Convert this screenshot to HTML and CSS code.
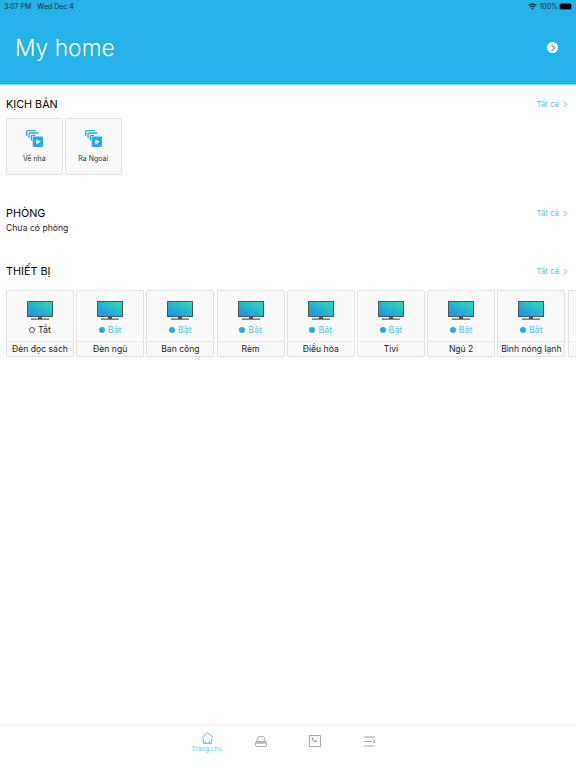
FILE: index.html
```html
<!DOCTYPE html>
<html lang="en">
<head>
  <meta charset="UTF-8">
  <title>My home</title>
  <link rel="stylesheet" href="styles.css">
</head>
<body>

<svg class="defs" width="0" height="0">
  <defs>
    <linearGradient id="screen" x1="0" y1="1" x2="1" y2="0">
      <stop offset="0" stop-color="#1c8ff0"/>
      <stop offset="1" stop-color="#30dcae"/>
    </linearGradient>
    <symbol id="tv" viewBox="0 0 26 20">
      <rect x="0" y="0" width="26" height="16" fill="#4d5355"/>
      <rect x="1" y="1" width="24" height="14" fill="url(#screen)"/>
      <rect x="11" y="16" width="4" height="2" fill="#4d5355"/>
      <rect x="4" y="17.500" width="18" height="1.200" fill="#4d5355"/>
    </symbol>
    <symbol id="scene" viewBox="0 0 18 18">
      <path d="M.7 6V1.600q0-.9.9-.9h9" fill="none" stroke="#29abe2" stroke-width="1.400"/>
      <path d="M3.200 8.500V4.100q0-.9.9-.9h9" fill="none" stroke="#29abe2" stroke-width="1.400"/>
      <path d="M5.700 11V6.600q0-.9.9-.9h3" fill="none" stroke="#29abe2" stroke-width="1.400"/>
      <rect x="7" y="7" width="11" height="11" rx="1.200" fill="#29abe2"/>
      <path d="M11 10l4.500 2.500L11 15z" fill="#fff"/>
    </symbol>
  </defs>
</svg>

<header class="top">
  <div class="status">
    <div class="status-left"><span>3:07 PM</span><span>Wed Dec 4</span></div>
    <div class="status-right">
      <svg width="9" height="7" viewBox="0 0 11 8"><path d="M5.500 8L3.900 6.100q1.600-1.200 3.200 0zM3.200 5.300L2.200 4.100q3.300-2.500 6.600 0L7.800 5.300q-2.300-1.700-4.600 0zM1.500 3.300L.3 2q5.200-4 10.400 0L9.500 3.300q-4-3-8 0z" fill="#1b2b36"/></svg>
      <span>100%</span>
      <span class="battery"></span>
    </div>
  </div>
  <div class="top-row">
    <h1>My home</h1>
    <span class="top-arrow">
      <svg width="6" height="8" viewBox="0 0 6 8"><path d="M1.500 1l3 3-3 3" fill="none" stroke="#29abe2" stroke-width="1.300"/></svg>
    </span>
  </div>
</header>

<main>
  <section class="scenes">
    <div class="section-head">
      <h2>KỊCH BẢN</h2>
      <a class="all">Tất cả <svg width="5" height="7" viewBox="0 0 5 7"><path d="M1 .8l2.700 2.700L1 6.200" fill="none" stroke="#5bbfe9" stroke-width="1"/></svg></a>
    </div>
    <div class="scene-list">
      <div class="scene-card"><svg width="17" height="17"><use href="#scene"/></svg><span>Về nhà</span></div>
      <div class="scene-card"><svg width="17" height="17"><use href="#scene"/></svg><span>Ra Ngoài</span></div>
    </div>
  </section>

  <section class="rooms">
    <div class="section-head">
      <h2>PHÒNG</h2>
      <a class="all">Tất cả <svg width="5" height="7" viewBox="0 0 5 7"><path d="M1 .8l2.700 2.700L1 6.200" fill="none" stroke="#5bbfe9" stroke-width="1"/></svg></a>
    </div>
    <p class="empty">Chưa có phòng</p>
  </section>

  <section class="devices">
    <div class="section-head">
      <h2>THIẾT BỊ</h2>
      <a class="all">Tất cả <svg width="5" height="7" viewBox="0 0 5 7"><path d="M1 .8l2.700 2.700L1 6.200" fill="none" stroke="#5bbfe9" stroke-width="1"/></svg></a>
    </div>
    <div class="device-list">
      <div class="device"><div class="device-body"><svg width="26" height="20"><use href="#tv"/></svg><div class="state off"><i></i>Tắt</div></div><div class="device-name">Đèn đọc sách</div></div>
      <div class="device"><div class="device-body"><svg width="26" height="20"><use href="#tv"/></svg><div class="state"><i></i>Bật</div></div><div class="device-name">Đèn ngủ</div></div>
      <div class="device"><div class="device-body"><svg width="26" height="20"><use href="#tv"/></svg><div class="state"><i></i>Bật</div></div><div class="device-name">Ban công</div></div>
      <div class="device"><div class="device-body"><svg width="26" height="20"><use href="#tv"/></svg><div class="state"><i></i>Bật</div></div><div class="device-name">Rèm</div></div>
      <div class="device"><div class="device-body"><svg width="26" height="20"><use href="#tv"/></svg><div class="state"><i></i>Bật</div></div><div class="device-name">Điều hòa</div></div>
      <div class="device"><div class="device-body"><svg width="26" height="20"><use href="#tv"/></svg><div class="state"><i></i>Bật</div></div><div class="device-name">Tivi</div></div>
      <div class="device"><div class="device-body"><svg width="26" height="20"><use href="#tv"/></svg><div class="state"><i></i>Bật</div></div><div class="device-name">Ngủ 2</div></div>
      <div class="device"><div class="device-body"><svg width="26" height="20"><use href="#tv"/></svg><div class="state"><i></i>Bật</div></div><div class="device-name">Bình nóng lạnh</div></div>
      <div class="device"><div class="device-body"></div><div class="device-name"></div></div>
    </div>
  </section>
</main>

<nav class="tabs">
  <div class="tab active">
    <svg width="13" height="12" viewBox="0 0 14 13"><path d="M.6 6.200L7 .8l6.400 5.400M2.500 7v5.300h9V7M5 9.500v2.800M9 9.500v2.800" fill="none" stroke="#45b6ea" stroke-width="1"/></svg>
    <span>Trang chủ</span>
  </div>
  <div class="tab">
    <svg width="12" height="11" viewBox="0 0 12 11"><path d="M1.800 5.500L2.600 1.600q.2-1 1.200-1h4.400q1 0 1.200 1l.8 3.900" fill="none" stroke="#aaa" stroke-width="1"/><rect x=".6" y="5.500" width="10.800" height="5" rx="1" fill="none" stroke="#aaa" stroke-width="1"/><rect x="1" y="6" width="10" height="1.800" fill="#bbb"/></svg>
  </div>
  <div class="tab">
    <svg width="12" height="12" viewBox="0 0 12 12"><rect x=".5" y=".5" width="11" height="11" fill="none" stroke="#aaa"/><path d="M2.500 2.500l2 1.800-2 1.800M5 6.200h3" fill="none" stroke="#666" stroke-width=".9"/></svg>
  </div>
  <div class="tab">
    <svg width="12" height="11" viewBox="0 0 12 11"><path d="M.5 1h11M.5 5.500h8.500M.5 10h11" fill="none" stroke="#aaa"/><path d="M9.800 3.800l1.700 1.700-1.700 1.700" fill="none" stroke="#888" stroke-width=".9"/></svg>
  </div>
</nav>

</body>
</html>
```

FILE: styles.css
```css
* {
  box-sizing: border-box;
}

html, body {
  height: 100%;
}

body {
  margin: 0;
  font-family: "Inter", "Liberation Sans", sans-serif;
  color: #111;
  background: #fff;
  display: flex;
  flex-direction: column;
  overflow: hidden;
}

.defs {
  position: absolute;
}

.top {
  height: 85px;
  flex: none;
  background: #27b1e9;
  border-bottom: 1px solid #7fd0f2;
}

.status {
  height: 12px;
  padding: 0 5px 0 4px;
  display: flex;
  justify-content: space-between;
  align-items: center;
  font-size: 7px;
  color: #1b2b36;
}

.status-left {
  display: flex;
  gap: 6px;
}

.status-right {
  display: flex;
  align-items: center;
  gap: 2px;
}

.battery {
  width: 11px;
  height: 5px;
  background: #000;
  border-radius: 1px;
  outline: 1px solid #1b6f95;
}

.top-row {
  height: 72px;
  padding: 0 18px 1px 15px;
  display: flex;
  justify-content: space-between;
  align-items: center;
}

h1 {
  margin: 0;
  font-size: 22.800px;
  font-weight: 300;
  color: #fff;
}

.top-arrow {
  width: 11px;
  height: 11px;
  border-radius: 50%;
  background: #fff;
  display: flex;
  align-items: center;
  justify-content: center;
}

main {
  flex: 1;
  padding-left: 6px;
  min-width: 0;
}

.section-head {
  display: flex;
  justify-content: space-between;
  align-items: center;
  height: 16px;
  padding-right: 8px;
}

h2 {
  margin: 0;
  font-size: 10.800px;
  font-weight: 400;
  color: #000;
}

.all {
  font-size: 7.800px;
  color: #5bbfe9;
  display: flex;
  align-items: center;
  gap: 4px;
}

.scenes {
  padding-top: 11px;
}

.scene-list {
  display: flex;
  gap: 2.500px;
  margin-top: 6px;
}

.scene-card {
  width: 56.500px;
  height: 57px;
  background: #fafafa;
  border: 1px solid #e2e2e2;
  border-radius: 2px;
  display: flex;
  flex-direction: column;
  align-items: center;
  padding-top: 11px;
  font-size: 7px;
  color: #333;
}

.scene-card span {
  margin-top: 7px;
}

.rooms {
  margin-top: 30px;
}

.empty {
  margin: 2px 0 0;
  font-size: 8.600px;
  color: #222;
}

.devices {
  margin-top: 30px;
}

.device-list {
  display: flex;
  gap: 2.200px;
  margin-top: 11px;
  overflow: hidden;
}

.device {
  flex: none;
  width: 68px;
  height: 67px;
  background: #fafafa;
  border: 1px solid #e2e2e2;
  border-radius: 2px;
  display: flex;
  flex-direction: column;
}

.device-body {
  height: 51px;
  border-bottom: 1px solid #e8e8e8;
  display: flex;
  flex-direction: column;
  align-items: center;
  padding-top: 10px;
}

.state {
  display: flex;
  align-items: center;
  gap: 3px;
  font-size: 8.800px;
  color: #5bbfe9;
  margin-top: 3px;
}

.state i {
  width: 6px;
  height: 6px;
  border-radius: 50%;
  background: #29abe2;
}

.state.off {
  color: #222;
}

.state.off i {
  background: #fff;
  border: 1px solid #555;
}

.device-name {
  flex: 1;
  display: flex;
  align-items: center;
  justify-content: center;
  font-size: 8.600px;
  white-space: nowrap;
  color: #222;
}

.tabs {
  flex: none;
  height: 43px;
  border-top: 1px solid #f3f3f3;
  box-shadow: 0 -1px 2px #f5f5f5;
  display: flex;
  justify-content: center;
  gap: 14px;
}

.tab {
  width: 40px;
  height: 32px;
  display: flex;
  flex-direction: column;
  align-items: center;
  justify-content: flex-end;
  font-size: 6.500px;
  color: #6cc5ec;
  padding-bottom: 11px;
}

.tab.active {
  justify-content: flex-start;
  padding: 6px 0 0;
  gap: 1px;
}
```
